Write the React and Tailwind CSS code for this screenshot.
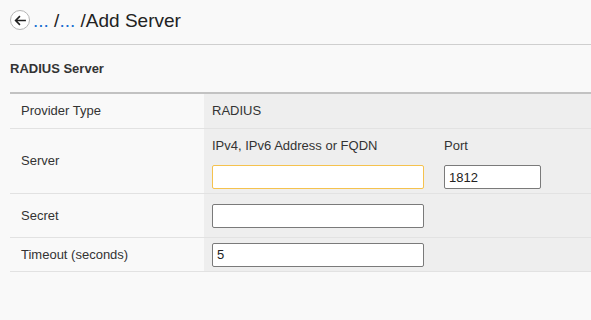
export default function App() {
  const font = { fontFamily: '"Liberation Sans", Arial, sans-serif' };

  return (
    <div className="min-h-[320px] w-[591px] bg-[#f9f9f9] text-[#333]" style={font}>
      <div className="ml-[10px] flex h-[45px] items-center gap-[3px] border-b border-[#cfcfcf] pb-[4px]">
        <button
          type="button"
          className="flex h-[20px] w-[20px] shrink-0 items-center justify-center rounded-full border border-[#b5b5b5] bg-white text-[#222]"
        >
          <svg width="13" height="13" viewBox="0 0 12 12" fill="none" stroke="currentColor" strokeWidth="1.5">
            <path d="M11 6H1.5M5.5 2L1.5 6l4 4" />
          </svg>
        </button>
        <h1 className="text-[19px] leading-none text-[#222]">
          <span className="text-[#1a6fd1]">...</span> /<span className="text-[#1a6fd1]">...</span> /Add Server
        </h1>
      </div>

      <div className="ml-[10px] flex h-[49px] items-center border-b-2 border-[#c2c2c2]">
        <h2 className="text-[13px] font-bold text-[#333]">RADIUS Server</h2>
      </div>

      <div className="ml-[10px] text-[13px]">
        <div className="grid h-[35px] grid-cols-[194px_1fr] border-b border-[#e2e2e2]">
          <div className="flex items-center pl-[11px]">Provider Type</div>
          <div className="flex items-center bg-[#eeeeee] pl-[8px]">RADIUS</div>
        </div>

        <div className="grid h-[65px] grid-cols-[194px_1fr] border-b border-[#e2e2e2]">
          <div className="flex items-center pl-[11px]">Server</div>
          <div className="flex gap-[20px] bg-[#eeeeee] pl-[8px] pt-[9px]">
            <div className="flex flex-col">
              <span className="leading-[15px]">IPv4, IPv6 Address or FQDN</span>
              <input
                type="text"
                className="mt-[12px] h-[24px] w-[212px] rounded-[2px] border border-[#f5c24e] bg-white px-[4px] text-[13px] outline-none"
              />
            </div>
            <div className="flex flex-col">
              <span className="leading-[15px]">Port</span>
              <input
                type="text"
                defaultValue="1812"
                className="mt-[12px] h-[24px] w-[97px] rounded-[2px] border border-[#7a7a7a] bg-white px-[4px] text-[13px] text-[#222] outline-none"
              />
            </div>
          </div>
        </div>

        <div className="grid h-[44px] grid-cols-[194px_1fr] border-b border-[#e2e2e2]">
          <div className="flex items-center pl-[11px]">Secret</div>
          <div className="flex items-center bg-[#eeeeee] pl-[8px]">
            <input
              type="password"
              className="h-[24px] w-[212px] rounded-[2px] border border-[#7a7a7a] bg-white px-[4px] text-[13px] outline-none"
            />
          </div>
        </div>

        <div className="grid h-[34px] grid-cols-[194px_1fr] border-b border-[#e2e2e2]">
          <div className="flex items-center pl-[11px]">Timeout (seconds)</div>
          <div className="flex items-center bg-[#eeeeee] pl-[8px]">
            <input
              type="text"
              defaultValue="5"
              className="h-[24px] w-[212px] rounded-[2px] border border-[#7a7a7a] bg-white px-[4px] text-[13px] text-[#222] outline-none"
            />
          </div>
        </div>
      </div>
    </div>
  );
}
